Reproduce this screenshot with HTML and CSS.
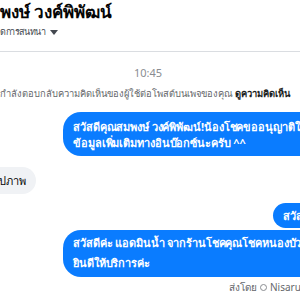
FILE: index.html
```html
<!DOCTYPE html>
<html lang="th">
<head>
<meta charset="utf-8">
<link rel="stylesheet" href="styles.css">
</head>
<body>
<div class="page">
  <header class="header">
    <div class="name">พงษ์ วงค์พิพัฒน์</div>
    <div class="sub"><span class="subtext">ดการสนทนา</span> <span class="caret"></span></div>
  </header>
  <div class="thread">
    <div class="time">10:45</div>
    <div class="notice">กำลังตอบกลับความคิดเห็นของผู้ใช้ต่อโพสต์บนเพจของคุณ <b>ดูความคิดเห็น</b></div>
    <div class="row out first">
      <div class="bubble big">
        <div>สวัสดีคุณสมพงษ์ วงค์พิพัฒน์!น้องโชคขออนุญาติให้</div>
        <div>ข้อมูลเพิ่มเติมทางอินบ๊อกซ์นะครับ ^^</div>
      </div>
    </div>
    <div class="row in">
      <div class="bubble grey">รูปภาพ</div>
    </div>
    <div class="row out pillrow">
      <div class="bubble pill">สวัสดีครับ</div>
    </div>
    <div class="row out second">
      <div class="bubble big two">
        <div>สวัสดีค่ะ แอดมินน้ำ จากร้านโชคคุณโชคหนองบัวสาขา</div>
        <div class="l2">ยินดีให้บริการค่ะ</div>
      </div>
    </div>
    <div class="sent">ส่งโดย <span class="dot"></span> Nisarut</div>
  </div>
</div>
</body>
</html>
```
FILE: styles.css
```css
html, body {
  margin: 0;
  padding: 0;
  background: #fff;
}
body {
  font-family: "Noto Sans", "Liberation Sans", sans-serif;
  color: #050505;
}
.page {
  width: 300px;
  height: 300px;
  overflow: hidden;
  display: flex;
  flex-direction: column;
}
.header {
  height: 52px;
  border-bottom: 1px solid #dadde1;
  display: flex;
  flex-direction: column;
  padding-top: 1px;
  box-sizing: border-box;
  flex-shrink: 0;
}
.name {
  font-size: 17px;
  font-weight: 700;
  line-height: 22px;
  white-space: nowrap;
}
.sub {
  font-size: 9px;
  line-height: 16px;
  color: #444950;
  margin-top: 1px;
  white-space: nowrap;
  display: flex;
  align-items: center;
  gap: 5px;
}
.subtext {
  letter-spacing: -0.4px;
}
.caret {
  width: 0;
  height: 0;
  border-left: 4px solid transparent;
  border-right: 4px solid transparent;
  border-top: 5px solid #444950;
}
.thread {
  display: flex;
  flex-direction: column;
}
.time {
  text-align: center;
  font-size: 11px;
  line-height: 14px;
  color: #8a8d91;
  margin-top: 14px;
  margin-left: -4px;
}
.notice {
  font-size: 9.4px;
  line-height: 14px;
  color: #65676b;
  white-space: nowrap;
  margin-top: 7px;
}
.notice b {
  color: #1c1e21;
}
.row {
  display: flex;
  white-space: nowrap;
}
.bubble {
  font-size: 11px;
  line-height: 16px;
}
.out .bubble {
  background: #0a7cff;
  color: #fff;
  font-weight: 700;
}
.first {
  margin-top: 11px;
  padding-left: 63px;
}
.big {
  width: 320px;
  flex-shrink: 0;
  padding: 7px 10px 5px 10px;
  border-radius: 18px 0 0 18px;
  letter-spacing: -0.1px;
}
.in {
  margin-top: 11px;
  margin-left: -17px;
}
.grey {
  background: #f0f2f5;
  padding: 5px 10px;
  border-radius: 14px;
  color: #050505;
  line-height: 17px;
}
.pillrow {
  margin-top: 9px;
  padding-left: 273px;
}
.pill {
  padding: 5px 10px 4px;
  border-radius: 14px 0 0 14px;
  width: 60px;
  flex-shrink: 0;
}
.second {
  margin-top: 2px;
  padding-left: 63px;
}
.two {
  padding: 5px 10px 6px 10px;
}
.two .l2 {
  margin-top: 4px;
}
.sent {
  align-self: flex-start;
  margin-left: 229px;
  margin-top: 3px;
  font-size: 10px;
  line-height: 14px;
  color: #65676b;
  white-space: nowrap;
  display: flex;
  align-items: center;
  gap: 3px;
}
.dot {
  width: 7px;
  height: 7px;
  border-radius: 50%;
  border: 1px solid #8a8d91;
  box-sizing: border-box;
}
```
